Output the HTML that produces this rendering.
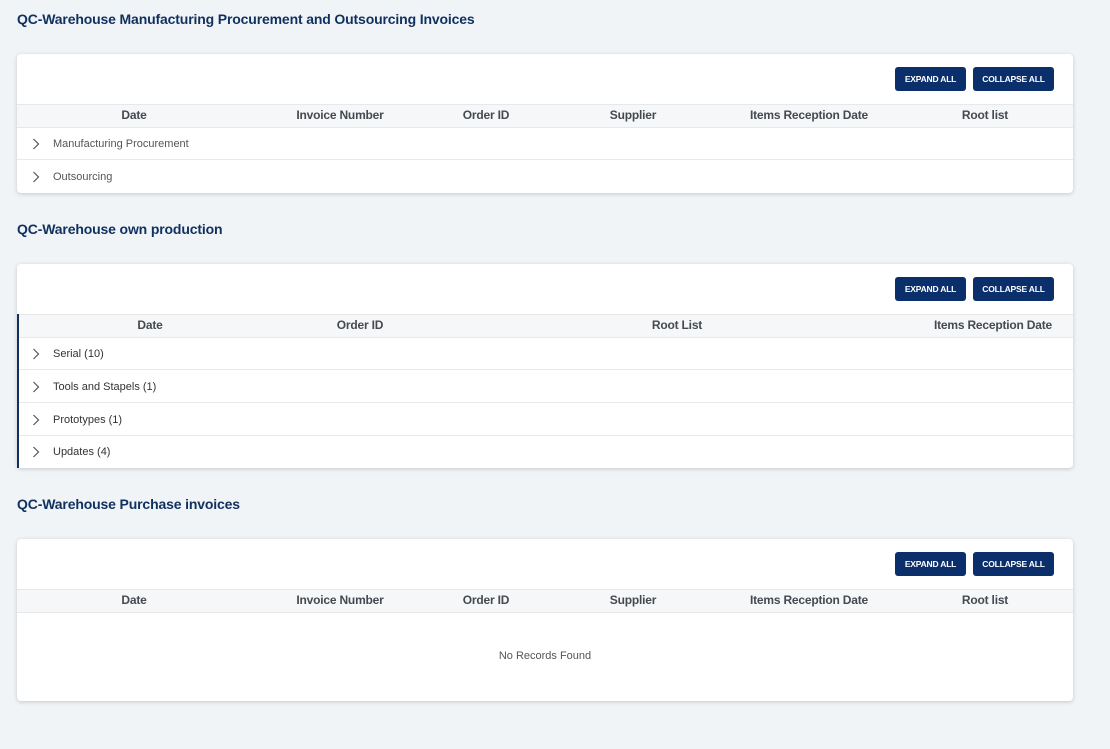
<!DOCTYPE html>
<html><head><style>
body{margin:0;background:#f0f4f7;font-family:"Liberation Sans",sans-serif;width:1110px;height:749px;position:relative;overflow:hidden}
.t{position:absolute;left:17px;font-size:14px;letter-spacing:-0.15px;font-weight:bold;color:#10305f}
.card{position:absolute;left:17px;width:1056px;background:#fff;border-radius:4px;box-shadow:0 1px 4px rgba(0,0,0,.18)}
.btn{position:absolute;top:13px;height:24px;background:#0b2f6b;color:#fff;font-size:8.5px;font-weight:bold;border-radius:3px;line-height:24px;text-align:center;letter-spacing:-0.2px}
.hd{position:absolute;left:0;right:0;top:50px;height:22px;background:#f6f7f8;border-top:1px solid #e6e8ea;border-bottom:1px solid #e6e8ea}
.hd span{position:absolute;top:3px;font-size:12px;font-weight:bold;color:#454a50;transform:translateX(-50%);white-space:nowrap;letter-spacing:-0.2px}
.row{position:absolute;left:0;right:0;height:32px;border-bottom:1px solid #e8e9eb;font-size:11px;color:#555}
.row svg{position:absolute;left:14px;top:10px}
.row span{position:absolute;left:36px;top:11px}
.b span{color:#333}
</style></head><body>
<div class="t" style="top:11px">QC-Warehouse Manufacturing Procurement and Outsourcing Invoices</div>
<div class="card" style="top:54px;height:139px">
<div class="btn" style="left:878px;width:71px">EXPAND ALL</div><div class="btn" style="left:956px;width:81px">COLLAPSE ALL</div>
<div class="hd"><span style="left:117px">Date</span><span style="left:323px">Invoice Number</span><span style="left:469px">Order ID</span><span style="left:616px">Supplier</span><span style="left:792px">Items Reception Date</span><span style="left:968px">Root list</span></div>
<div class="row" style="top:73px"><svg width="10" height="14"><path d="M2.5 2l5 5-5 5" fill="none" stroke="#555" stroke-width="1.2"/></svg><span>Manufacturing Procurement</span></div>
<div class="row" style="top:106px;border:none"><svg width="10" height="14"><path d="M2.5 2l5 5-5 5" fill="none" stroke="#555" stroke-width="1.2"/></svg><span>Outsourcing</span></div>
</div>
<div class="t" style="top:221px">QC-Warehouse own production</div>
<div class="card" style="top:264px;height:204px">
<div class="btn" style="left:878px;width:71px">EXPAND ALL</div><div class="btn" style="left:956px;width:81px">COLLAPSE ALL</div>
<div style="position:absolute;left:0;top:50px;width:2px;height:154px;background:#10305f;z-index:2"></div>
<div class="hd"><span style="left:133px">Date</span><span style="left:343px">Order ID</span><span style="left:660px">Root List</span><span style="left:976px">Items Reception Date</span></div>
<div class="b">
<div class="row" style="top:73px"><svg width="10" height="14"><path d="M2.5 2l5 5-5 5" fill="none" stroke="#555" stroke-width="1.2"/></svg><span>Serial (10)</span></div>
<div class="row" style="top:106px"><svg width="10" height="14"><path d="M2.5 2l5 5-5 5" fill="none" stroke="#555" stroke-width="1.2"/></svg><span>Tools and Stapels (1)</span></div>
<div class="row" style="top:139px"><svg width="10" height="14"><path d="M2.5 2l5 5-5 5" fill="none" stroke="#555" stroke-width="1.2"/></svg><span>Prototypes (1)</span></div>
<div class="row" style="top:171px;border:none"><svg width="10" height="14"><path d="M2.5 2l5 5-5 5" fill="none" stroke="#555" stroke-width="1.2"/></svg><span>Updates (4)</span></div>
</div></div>
<div class="t" style="top:496px">QC-Warehouse Purchase invoices</div>
<div class="card" style="top:539px;height:162px">
<div class="btn" style="left:878px;width:71px">EXPAND ALL</div><div class="btn" style="left:956px;width:81px">COLLAPSE ALL</div>
<div class="hd"><span style="left:117px">Date</span><span style="left:323px">Invoice Number</span><span style="left:469px">Order ID</span><span style="left:616px">Supplier</span><span style="left:792px">Items Reception Date</span><span style="left:968px">Root list</span></div>
<div style="position:absolute;left:0;right:0;top:111px;text-align:center;font-size:11px;color:#555">No Records Found</div>
</div>
</body></html>
